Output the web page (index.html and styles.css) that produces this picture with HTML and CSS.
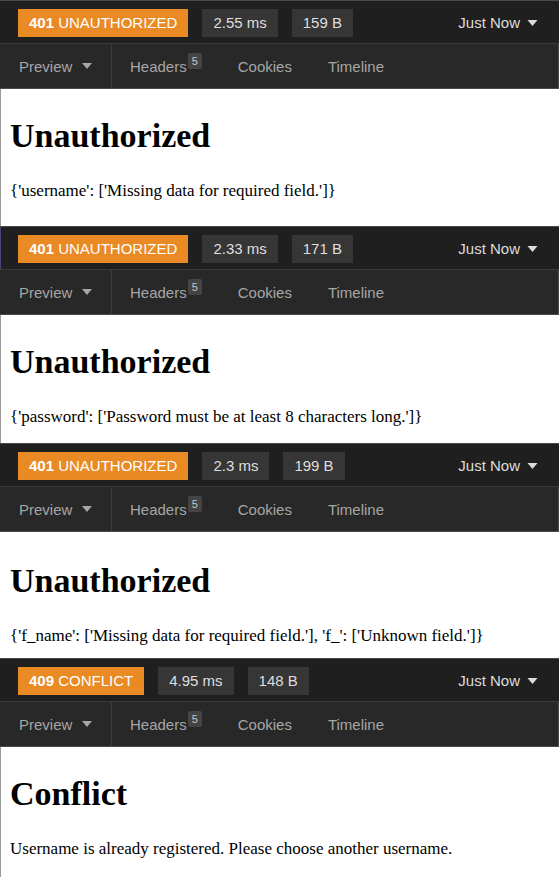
FILE: index.html
```html
<!DOCTYPE html>
<html>
<head>
<meta charset="utf-8">
<link rel="stylesheet" href="styles.css">
</head>
<body>

<section class="panel">
  <div class="topbar">
    <span class="status"><b>401</b> UNAUTHORIZED</span>
    <span class="pill">2.55 ms</span>
    <span class="pill">159 B</span>
    <span class="when">Just Now <svg class="caret" viewBox="0 0 10 6"><polygon points="0,0 10,0 5,6"/></svg></span>
  </div>
  <div class="tabs">
    <span class="tab preview">Preview <svg class="caret" viewBox="0 0 10 6"><polygon points="0,0 10,0 5,6"/></svg></span>
    <span class="tab headers">Headers<sup class="count">5</sup></span>
    <span class="tab">Cookies</span>
    <span class="tab">Timeline</span>
  </div>
  <div class="body edge h1">
    <h1>Unauthorized</h1>
    <p>{'username': ['Missing data for required field.']}</p>
  </div>
</section>

<section class="panel">
  <div class="topbar purple">
    <span class="status"><b>401</b> UNAUTHORIZED</span>
    <span class="pill">2.33 ms</span>
    <span class="pill">171 B</span>
    <span class="when">Just Now <svg class="caret" viewBox="0 0 10 6"><polygon points="0,0 10,0 5,6"/></svg></span>
  </div>
  <div class="tabs">
    <span class="tab preview">Preview <svg class="caret" viewBox="0 0 10 6"><polygon points="0,0 10,0 5,6"/></svg></span>
    <span class="tab headers">Headers<sup class="count">5</sup></span>
    <span class="tab">Cookies</span>
    <span class="tab">Timeline</span>
  </div>
  <div class="body edge h2">
    <h1>Unauthorized</h1>
    <p>{'password': ['Password must be at least 8 characters long.']}</p>
  </div>
</section>

<section class="panel">
  <div class="topbar">
    <span class="status"><b>401</b> UNAUTHORIZED</span>
    <span class="pill">2.3 ms</span>
    <span class="pill">199 B</span>
    <span class="when">Just Now <svg class="caret" viewBox="0 0 10 6"><polygon points="0,0 10,0 5,6"/></svg></span>
  </div>
  <div class="tabs">
    <span class="tab preview">Preview <svg class="caret" viewBox="0 0 10 6"><polygon points="0,0 10,0 5,6"/></svg></span>
    <span class="tab headers">Headers<sup class="count">5</sup></span>
    <span class="tab">Cookies</span>
    <span class="tab">Timeline</span>
  </div>
  <div class="body h3">
    <h1>Unauthorized</h1>
    <p>{'f_name': ['Missing data for required field.'], 'f_': ['Unknown field.']}</p>
  </div>
</section>

<section class="panel">
  <div class="topbar">
    <span class="status"><b>409</b> CONFLICT</span>
    <span class="pill">4.95 ms</span>
    <span class="pill">148 B</span>
    <span class="when">Just Now <svg class="caret" viewBox="0 0 10 6"><polygon points="0,0 10,0 5,6"/></svg></span>
  </div>
  <div class="tabs">
    <span class="tab preview">Preview <svg class="caret" viewBox="0 0 10 6"><polygon points="0,0 10,0 5,6"/></svg></span>
    <span class="tab headers">Headers<sup class="count">5</sup></span>
    <span class="tab">Cookies</span>
    <span class="tab">Timeline</span>
  </div>
  <div class="body edge h4">
    <h1>Conflict</h1>
    <p>Username is already registered. Please choose another username.</p>
  </div>
</section>

</body>
</html>
```
FILE: styles.css
```css
* { box-sizing: border-box; }
html, body { margin: 0; padding: 0; background: #ffffff; }
body { width: 559px; font-family: "Liberation Sans", Arial, sans-serif; }

.panel { display: flex; flex-direction: column; }

.topbar {
  display: flex;
  align-items: center;
  gap: 14px;
  height: 44px;
  padding: 1px 0 0 18px;
  background: #1f1f1f;
  border-top: 1px solid #4a4a4a;
  border-bottom: 1px solid #3a3a3a;
  font-size: 15px;
}
.topbar.purple { border-left: 1px solid #4b4478; padding-left: 17px; }

.status {
  height: 28px;
  line-height: 28px;
  padding: 0 11px;
  background: #e98a25;
  color: #ffffff;
  white-space: nowrap;
}
.status b { font-weight: bold; }

.pill {
  height: 28px;
  line-height: 28px;
  padding: 0 11px;
  background: #363636;
  color: #dedede;
  white-space: nowrap;
}

.when {
  margin-left: auto;
  margin-right: 21px;
  display: flex;
  align-items: center;
  gap: 7px;
  color: #dcdcdc;
}

.caret { width: 11px; height: 6px; fill: currentColor; }

.tabs {
  display: flex;
  align-items: center;
  height: 45px;
  background: #282828;
  border-bottom: 1px solid #4a4a4a;
  border-right: 1px solid #4a4a4a;
  font-size: 15px;
  color: #a6a6a6;
}
.tab { display: flex; align-items: center; margin-right: 36px; }
.tab.preview {
  height: 100%;
  width: 112px;
  padding-left: 19px;
  margin-right: 18px;
  gap: 10px;
  border-right: 1px solid #3a3a3a;
}
.tab.preview .caret { color: #a6a6a6; width: 10px; height: 6px; }
.tab.headers { position: relative; margin-right: 36px; }
.count {
  display: inline-block;
  width: 14px;
  height: 16px;
  margin-left: 1px;
  margin-top: -10px;
  line-height: 16px;
  text-align: center;
  background: #444444;
  color: #c8c8c8;
  font-size: 11px;
  border-radius: 2px;
  vertical-align: top;
}

.body {
  padding: 28px 10px 0 10px;
  background: #ffffff;
  color: #000000;
  font-family: "Liberation Serif", "Times New Roman", serif;
}
.body.edge { border-left: 1px solid #9a9a9a; padding-left: 9px; }
.body.h1 { height: 137px; }
.body.h2 { height: 128px; }
.body.h3 { height: 126px; padding-top: 30px; }
.body.h4 { height: 130px; }

.body h1 {
  margin: 0 0 26px 0;
  font-size: 34px;
  font-weight: bold;
  line-height: 38px;
}
.body p {
  margin: 0;
  font-size: 17px;
  line-height: 19px;
}
```
